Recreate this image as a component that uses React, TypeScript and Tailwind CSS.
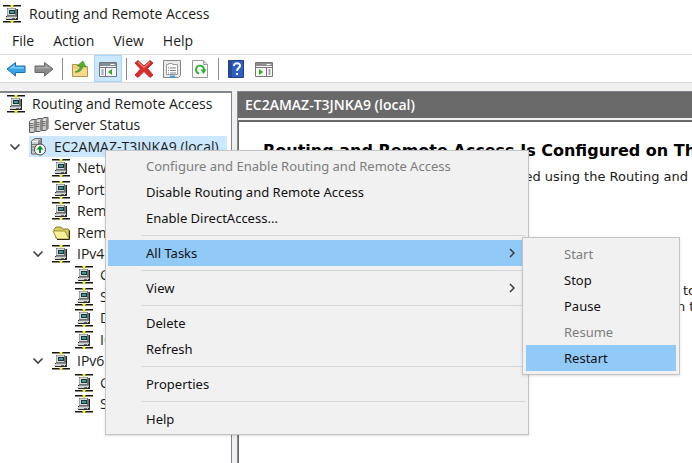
import type { ReactNode } from "react";

function NetworkIcon() {
  return (
    <svg viewBox="0 0 18 18" className="h-[18px] w-[18px] shrink-0" shapeRendering="crispEdges" aria-hidden="true">
      <path d="M0 0h18v1H0zM0 16h18v1H0z" fill="#17170f" />
      <path d="M0 1h18v1H0zM0 17h18v1H0z" fill="#8a8a84" />
      <path d="M7 0h4v2H7zM7 16h4v2H7z" fill="#8f8d1c" />
      <path d="M8 0h2v3H8zM8 15h2v3H8z" fill="#eceb4a" />
      <path d="M4 3h9v1h1v7H4z" fill="#6b7071" />
      <path d="M5 3h7v1H5zM4 4h1v6H4z" fill="#a3a9aa" />
      <path d="M5 4h7v6H5z" fill="#d6dcdc" />
      <path d="M6 5h6v4H6z" fill="#1b3436" />
      <path d="M7 6h4v2H7z" fill="#3f9c98" />
      <path d="M14 4h1v7h-1z" fill="#1e1e1e" />
      <path d="M3 11h12v4H3z" fill="#2b2b2b" />
      <path d="M4 11h10v1H4z" fill="#8d9292" />
      <path d="M3 12h11v1H3zM2 13h11v1H2z" fill="#cfd3d3" />
      <path d="M9 13h3v1H9z" fill="#666" />
    </svg>
  );
}

function Tower({ x, y }: { x: number; y: number }) {
  return (
    <g transform={`translate(${x} ${y})`}>
      <path d="M.5 2.5 3 .5h4v11l-2 2H.5z" fill="#c9c7c6" stroke="#5d5b5b" />
      <path d="M5 2.5v11l2-2v-11z" fill="#8c8988" />
      <path d="M1 4.500h3.500M1 6.500h3.500M1 8.500h3.500" stroke="#777" />
      <path d="M1 3h4" stroke="#fff" />
    </g>
  );
}

function ServersIcon() {
  return (
    <svg viewBox="0 0 20 18" className="h-[18px] w-[20px] shrink-0" aria-hidden="true">
      <Tower x={12} y={1} />
      <Tower x={6} y={2} />
      <Tower x={0} y={3} />
    </svg>
  );
}

function ServerRunningIcon() {
  return (
    <svg viewBox="0 0 18 18" className="h-[18px] w-[18px] shrink-0" aria-hidden="true">
      <path d="M2.500 3 6 .5h6.500v13L10 16H2.500z" fill="#cfcdcc" stroke="#6a6868" />
      <path d="M9 3l3-2v12l-3 3z" fill="#8d8b8a" />
      <path d="M3 3.500h6" stroke="#fff" />
      <path d="M3 6.500h5M3 9h5M3 12h5" stroke="#777" />
      <circle cx="11" cy="11.500" r="5.500" fill="#fff" stroke="#444" />
      <path d="M11 10v5" stroke="#0a8f22" strokeWidth="2" />
      <path d="m11 7.500 3.500 4h-7z" fill="#0a8f22" />
    </svg>
  );
}

function FolderIcon() {
  return (
    <svg viewBox="0 0 19 16" className="h-4 w-[19px] shrink-0" aria-hidden="true">
      <path d="M2 4.500 4 2h5l1.500 2H16l1 1v8H4z" fill="#d8cb62" stroke="#8b7d2b" />
      <path d="M1 6h12l4 8H5z" fill="#fbf29c" stroke="#a2933a" />
      <path d="M17.500 5.500v9H5" stroke="#2b2812" fill="none" />
    </svg>
  );
}

function Chevron({ dir }: { dir: "down" | "right" }) {
  return dir === "down" ? (
    <svg viewBox="0 0 12 8" className="h-2 w-3" aria-hidden="true">
      <path d="m1.500 1.500 4.500 4.500 4.500-4.500" fill="none" stroke="#404040" strokeWidth="1.600" />
    </svg>
  ) : (
    <svg viewBox="0 0 6 10" className="h-[10px] w-[6px]" aria-hidden="true">
      <path d="m1 1 4 4-4 4" fill="none" stroke="#333" strokeWidth="1.400" />
    </svg>
  );
}

type Node = { label: string; indent: string; icon: ReactNode; open?: boolean; selected?: boolean };

const L0 = "pl-[7px]";
const L1 = "pl-[29px]";
const L2 = "pl-[52px]";
const L3 = "pl-[75px]";

const nodes: Node[] = [
  { label: "Routing and Remote Access", indent: L0, icon: <NetworkIcon /> },
  { label: "Server Status", indent: L1, icon: <ServersIcon /> },
  { label: "EC2AMAZ-T3JNKA9 (local)", indent: L1, icon: <ServerRunningIcon />, open: true, selected: true },
  { label: "Network Interfaces", indent: L2, icon: <NetworkIcon /> },
  { label: "Ports", indent: L2, icon: <NetworkIcon /> },
  { label: "Remote Access Clients", indent: L2, icon: <NetworkIcon /> },
  { label: "Remote Access Logging", indent: L2, icon: <FolderIcon /> },
  { label: "IPv4", indent: L2, icon: <NetworkIcon />, open: true },
  { label: "General", indent: L3, icon: <NetworkIcon /> },
  { label: "Static Routes", indent: L3, icon: <NetworkIcon /> },
  { label: "DHCP Relay Agent", indent: L3, icon: <NetworkIcon /> },
  { label: "IGMP", indent: L3, icon: <NetworkIcon /> },
  { label: "IPv6", indent: L2, icon: <NetworkIcon />, open: true },
  { label: "General", indent: L3, icon: <NetworkIcon /> },
  { label: "Static Routes", indent: L3, icon: <NetworkIcon /> },
];

function TreeRow({ node }: { node: Node }) {
  return (
    <li className={`flex items-center ${node.indent}`}>
      {node.open && (
        <button aria-label={`Collapse ${node.label}`} className="-ml-5 flex w-5 items-center">
          <Chevron dir="down" />
        </button>
      )}
      <span className={`flex h-full items-center whitespace-nowrap ${node.selected ? "bg-[#cce8ff] pr-2" : ""}`}>
        <span className="flex w-[25px] items-center">{node.icon}</span>
        {node.label}
      </span>
    </li>
  );
}

function ToolButton({ label, active, children }: { label: string; active?: boolean; children: ReactNode }) {
  return (
    <button
      aria-label={label}
      className={`flex h-[27px] w-7 items-center justify-center ${active ? "border border-[#a8d5f7] bg-[#cce8ff]" : ""}`}
    >
      <svg viewBox="0 0 20 20" className="h-5 w-5 shrink-0" aria-hidden="true">
        {children}
      </svg>
    </button>
  );
}

function ToolDivider() {
  return (
    <span className="flex w-2 justify-center">
      <span className="h-[22px] w-px bg-[#8a8a8a]" />
    </span>
  );
}

function MenuItem({
  children,
  disabled,
  active,
  arrow,
}: {
  children: ReactNode;
  disabled?: boolean;
  active?: boolean;
  arrow?: boolean;
}) {
  return (
    <button
      role="menuitem"
      disabled={disabled}
      className={`flex h-[26px] w-full items-center justify-between pr-[11px] pl-[38px] text-left whitespace-nowrap ${
        active ? "bg-[#91c9f7]" : ""
      } ${disabled ? "text-[#7d7d7d]" : "text-[#111]"}`}
    >
      {children}
      {arrow && <Chevron dir="right" />}
    </button>
  );
}

function MenuDivider() {
  return <hr className="mt-1 mr-0 mb-1 ml-[34px] border-t border-[#d5d5d5]" />;
}

export default function App() {
  return (
    <div className="relative flex h-screen flex-col overflow-hidden bg-[#f0f0f0] font-['Open_Sans','Noto_Sans',sans-serif] text-[14px] leading-5 text-[#1c1c1c]">
      <header className="bg-white">
        <div className="flex h-7 items-center gap-2 pl-[3px]">
          <NetworkIcon />
          <h1>Routing and Remote Access</h1>
        </div>
        <nav className="flex h-[26px] items-center gap-[19px] pl-3">
          <button>File</button>
          <button>Action</button>
          <button>View</button>
          <button>Help</button>
        </nav>
        <div className="flex h-[29px] items-center border-y border-[#dadada] pl-[2px]">
          <ToolButton label="Back">
            <path d="M1 10 9.500 3.500V7H19v6.500H9.500V17z" fill="#3aa5ea" stroke="#1c6eae" />
            <path d="M3.500 9.500 8.500 5.500V8H18v1.500z" fill="#7ccbf8" />
          </ToolButton>
          <ToolButton label="Forward">
            <path d="M19 10 10.500 3.500V7H1v6.500h9.500V17z" fill="#8c8c8c" stroke="#666" />
            <path d="M16.500 9.500 11.500 5.500V8H2v1.500z" fill="#aaa" />
          </ToolButton>
          <ToolDivider />
          <ToolButton label="Up one level">
            <path d="M2.500 5.500h5l1.500 2h8.500v10h-15z" fill="#efd083" stroke="#b99345" />
            <path d="M3 10h14v7H3z" fill="#f5d98f" />
            <path d="M5 13c3-1 5-3 5.500-6L7 7l6-5 3 6-3-.8C12 11 9 14 5 13z" fill="#4db52d" stroke="#33861c" strokeWidth=".6" />
          </ToolButton>
          <ToolButton label="Show or hide console tree" active>
            <path d="M1.500 3.500h17v14h-17z" fill="#f8f8f8" stroke="#71777d" />
            <path d="M2 4h16v3H2z" fill="#858c94" />
            <path d="M12.500 5.500h4" stroke="#fff" />
            <path d="M2 8.500h16M7.500 9v8" stroke="#71777d" />
            <path d="M3.500 11h2M3.500 13h2M3.500 15h2" stroke="#3f658c" />
            <path d="M14 10v6l-4-3z" fill="#2fa52f" />
          </ToolButton>
          <ToolDivider />
          <ToolButton label="Delete">
            <path d="M4 1.500 10 7l6-5.500L19 4l-5.500 5.500L19 16l-3 2.500-6-6-6 6L1 16l5.500-6L1 4z" fill="#de2a2a" stroke="#b01818" strokeWidth=".8" />
            <path d="M4 3l6 5.500L16 3" fill="none" stroke="#f47c74" strokeWidth="1.200" />
          </ToolButton>
          <ToolButton label="Properties">
            <path d="M1.500 1.500h17v15l-2 2h-15z" fill="#e9ebed" stroke="#858585" />
            <path d="M4.500 5.500h2v-1h4v1h5v10h-11z" fill="#fff" stroke="#9a9a9a" />
            <path d="M6 9h1M8 9h6M6 11.500h1M8 11.500h6M6 14h1M8 14h6" stroke="#858585" />
            <path d="M8 17.500h5" stroke="#3d9be0" strokeWidth="2" />
          </ToolButton>
          <ToolButton label="Refresh">
            <path d="M2.500 1.500h11l4 4v13h-15z" fill="#fafafa" stroke="#9b9b9b" />
            <path d="M13.500 1.500v4h4" fill="#ddd" stroke="#9b9b9b" />
            <path d="M9 14.500A4 4 0 1 1 14 11" fill="none" stroke="#35ad35" strokeWidth="2" />
            <path d="M10.500 10.500h6l-3 4.500z" fill="#35ad35" />
          </ToolButton>
          <ToolDivider />
          <ToolButton label="Help">
            <path d="M2.500 1.500h15v17h-15z" fill="#2e5fc4" stroke="#203f86" />
            <path d="M3 2h3v16H3z" fill="#274b9b" />
            <path d="M8 7c0-4 6.500-3.500 6 0-.3 2-3 2.300-3 5" fill="none" stroke="#fff" strokeWidth="2" />
            <path d="M10 14h2v2h-2z" fill="#fff" />
          </ToolButton>
          <ToolButton label="Show or hide action pane">
            <path d="M1.500 3.500h17v14h-17z" fill="#f8f8f8" stroke="#777" />
            <path d="M2 4h16v3H2z" fill="#8d8d8d" />
            <path d="M12.500 5.500h4" stroke="#fff" />
            <path d="M2 8.500h16M12.500 9v8" stroke="#777" />
            <path d="M14.500 11h2M14.500 13h2M14.500 15h2" stroke="#555" />
            <path d="M5 10v6l4-3z" fill="#2fa52f" />
          </ToolButton>
        </div>
      </header>

      <main className="flex min-h-0 flex-1 gap-[5px] pt-2">
        <aside className="w-[232px] shrink-0 overflow-hidden border-t-2 border-r border-[#828790] bg-white">
          <ul className="grid h-[322px] auto-rows-fr">
            {nodes.map((node, i) => (
              <TreeRow key={i} node={node} />
            ))}
          </ul>
        </aside>
        <section className="flex min-w-0 flex-1 flex-col border-t border-l border-[#828790]">
          <h2 className="flex h-[26px] shrink-0 items-center bg-[#696969] pl-[7px] font-semibold text-white">
            EC2AMAZ-T3JNKA9 (local)
          </h2>
          <div className="mt-[2px] min-h-0 flex-1 overflow-hidden border-t-2 border-l border-[#696969] bg-white pt-[19px] pl-6 font-['DejaVu_Sans',Verdana,sans-serif] text-[13px] leading-4 whitespace-nowrap">
            <h3 className="text-[16px] leading-5 font-bold text-black">
              Routing and Remote Access Is Configured on This Server
            </h3>
            <p className="mt-2 pl-4">This server has already been configured using the Routing and</p>
            <p className="mt-[98px] pl-[420px]">to</p>
            <p className="pl-[414px]">n the</p>
          </div>
        </section>
      </main>

      <div
        role="menu"
        aria-label="Server actions"
        className="absolute top-[150px] left-[105px] w-[424px] border border-[#c4c4c4] bg-[#f1f1f1] p-[2px] font-['Noto_Sans','Open_Sans',sans-serif] text-[13px] shadow-sm"
      >
        <MenuItem disabled>Configure and Enable Routing and Remote Access</MenuItem>
        <MenuItem>Disable Routing and Remote Access</MenuItem>
        <MenuItem>Enable DirectAccess...</MenuItem>
        <MenuDivider />
        <MenuItem active arrow>All Tasks</MenuItem>
        <MenuDivider />
        <MenuItem arrow>View</MenuItem>
        <MenuDivider />
        <MenuItem>Delete</MenuItem>
        <MenuItem>Refresh</MenuItem>
        <MenuDivider />
        <MenuItem>Properties</MenuItem>
        <MenuDivider />
        <MenuItem>Help</MenuItem>
      </div>

      <div
        role="menu"
        aria-label="All Tasks"
        className="absolute top-[237px] left-[522px] w-[158px] border border-[#c4c4c4] bg-[#f1f1f1] p-[3px] font-['Noto_Sans','Open_Sans',sans-serif] text-[13px] shadow-sm"
      >
        <MenuItem disabled>Start</MenuItem>
        <MenuItem>Stop</MenuItem>
        <MenuItem>Pause</MenuItem>
        <MenuItem disabled>Resume</MenuItem>
        <MenuItem active>Restart</MenuItem>
      </div>
    </div>
  );
}
